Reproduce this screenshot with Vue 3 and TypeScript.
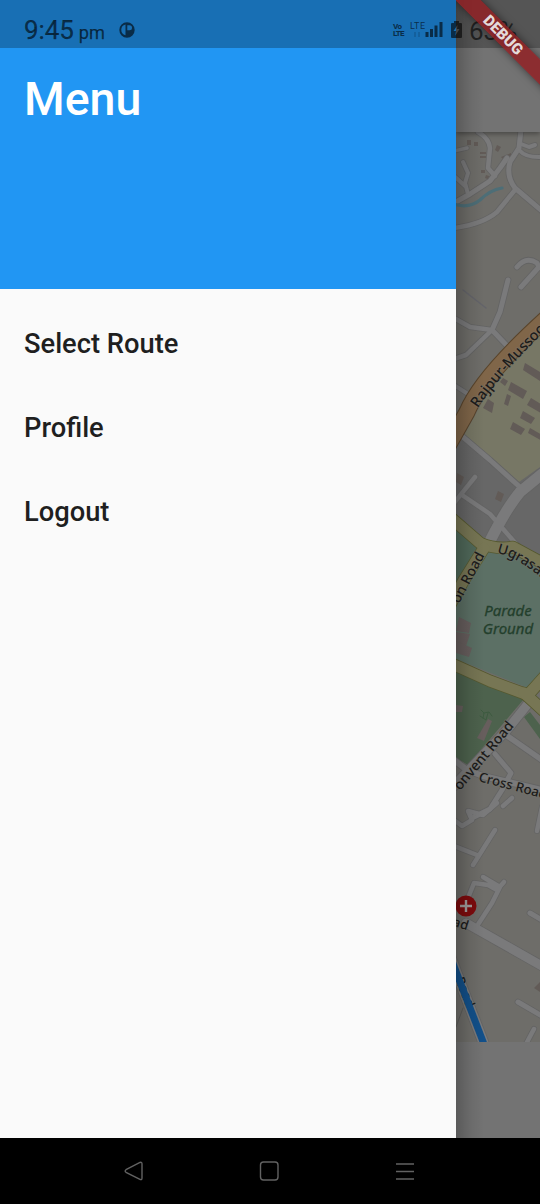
<script setup lang="ts">
interface Road {
  d: string
  w: number
}

const menuItems: string[] = ['Select Route', 'Profile', 'Logout']

const roads: Road[] = [
  { d: 'M454 203 L470 194 L490 181 L500 168 L507 158', w: 5 },
  { d: 'M478 132 Q489 138 490 148 L488 168 L495 176', w: 4.5 },
  { d: 'M521 130 L519 148 L510 162 Q506 176 515 188 L542 211', w: 5 },
  { d: 'M515 190 L497 212 Q483 224 454 228', w: 4.5 },
  { d: 'M519 150 Q526 158 542 157', w: 4 },
  { d: 'M521 144 L529 147 L535 145', w: 4 },
  { d: 'M454 151 L467 148', w: 3.5 },
  { d: 'M463 162 L468 173 L465 183 L468 194 M454 176 L465 186', w: 4 },
  { d: 'M517 267 Q526 256 537 263 L539 267 L521 287', w: 5 },
  { d: 'M508 280 L500 312 L492 330 L513 352', w: 5 },
  { d: 'M454 318 L470 327 L492 330 L466 355 L454 359', w: 4.5 },
  { d: 'M454 385 L468 394', w: 4 },
  { d: 'M463 437 L490 460 L521 488', w: 5 },
  { d: 'M454 503 L475 477', w: 4.5 },
  { d: 'M462 495 L490 514 L518 546', w: 4.5 },
  { d: 'M454 760 L467 770 L483 776 L542 790', w: 6 },
  { d: 'M506 735 L542 760', w: 5.5 },
  { d: 'M495 754 L511 773 L502 790 L490 809 L472 818', w: 5 },
  { d: 'M497 803 L483 815 L468 811 L472 820 L462 826 L454 820', w: 4.5 },
  { d: 'M512 798 L503 806', w: 4.5 },
  { d: 'M542 807 L537 831', w: 4.5 },
  { d: 'M495 830 L473 865 M454 846 L477 855', w: 4.5 },
  { d: 'M468 898 L474 883 L488 885 L497 890 L504 882 M483 877 L500 887 L492 903 L477 926', w: 4.5 },
  { d: 'M530 913 L542 920', w: 5 },
  { d: 'M518 1002 L542 1016', w: 5 },
  { d: 'M534 1029 L526 1044', w: 4.5 },
  { d: 'M466 923 L542 966', w: 9 },
  { d: 'M542 474 L520 492 Q506 509 490 541', w: 11 },
  { d: 'M531 700 L507 730 L467 772 L450 790', w: 9 },
  { d: 'M447 948 L487 1052', w: 10 },
]

const yellowRoads: Road[] = [
  { d: 'M450 517 L480 543 Q496 550 513 547 L544 564', w: 11 },
  { d: 'M484 548 L464 580 L450 605', w: 11 },
  { d: 'M450 663 L490 681 L528 695 L545 676', w: 11 },
  { d: 'M524 693 L546 713', w: 11 },
]

const buildings: string[] = [
  'M525 363 l15 9 v9 l-17 -11z',
  'M511 382 l16 9 -4 8 -15 -9z',
  'M531 398 l10 6 v9 l-14 -8z',
  'M523 411 l12 7 -4 6 -11 -6z',
  'M513 422 l12 7 -4 6 -11 -6z',
  'M530 428 l12 7 v6 l-14 -8z',
  'M488 399 l6 4 -2 10 -9 -5z',
  'M503 378 l5 3 -3 5 -5 -4z',
  'M507 394 l4 2 -3 10 -4 -2z',
]

const pinkBuildings: string[] = [
  'M459 617 l12 6 -2 10 -13 -2z',
  'M456 632 l14 2 -4 12 -10 -4z',
  'M456 641 l16 7 -3 9 -13 -4z',
  'M488 719 l4 2 -8 20 -7 -3z',
  'M456 705 l7 1 -1 6 -6 0z',
]
</script>

<template>
  <div class="screen">
    <main class="stage">
      <aside class="drawer">
        <header class="drawer-header"><h1>Menu</h1></header>
        <nav class="menu">
          <a v-for="item in menuItems" :key="item" class="menu-item">{{ item }}</a>
        </nav>
      </aside>

      <section class="page">
        <div class="appbar"></div>
        <svg class="map" viewBox="456 132 84 910" width="84" height="910">
          <defs>
            <path id="rajpur" d="M478 408 Q500 375 550 326" />
            <path id="ugrasain" d="M497 553 Q519 557 552 587" />
          </defs>
          <rect x="456" y="132" width="84" height="910" fill="#6e6d69" />
          <path d="M456 446 L465 435 L519 479 L540 462 V566 L513 549 L488 549 L456 522z" fill="#676767" />
          <path d="M463 437 L478 410 L493 383 L522 350 L540 335 V467 L519 482z" fill="#777765" />
          <g fill="#625b57">
            <path v-for="b in buildings" :key="b" :d="b" />
            <path d="M467 140h4v5h-4z M474 142h4v4h-4z M480 152h6v2h-6z M480 156h6v2h-6z M481 170h4v3h-4z M497 145l4 2-3 5-3-2z M501 157l10-4v3l-8 3z M486 175l6 2-2 3-5-2z M457 473l7 4-3 8-5-3z M498 491l6 3-3 8-6-3z M540 982l-6 6 6 4z" />
          </g>
          <path d="M456 526 L480 550 L456 589z" fill="#50695a" />
          <path d="M488 552 L514 552 L540 570 V681 L528 688 L456 659 V602z" fill="#5c7065" />
          <path d="M456 670 L524 699 L468 765 L456 758z" fill="#4d624d" />
          <path d="M524 717 L530 712 L540 725 V739z" fill="#4d624d" />
          <g fill="#675e5d">
            <path v-for="b in pinkBuildings" :key="b" :d="b" />
          </g>
          <g fill="none" stroke-linejoin="round" stroke-linecap="round">
            <path d="M463 290 L486 308" stroke="#64646a" stroke-width="1.5" />
            <path v-for="r in roads" :key="'c' + r.d" :d="r.d" stroke="#646464" :stroke-width="r.w + 1.6" />
            <path v-for="r in roads" :key="'f' + r.d" :d="r.d" stroke="#7a7a7b" :stroke-width="r.w" />
            <path d="M454 204 Q469 209 480 200 Q490 190 502 188" stroke="#4d6e77" stroke-width="3.2" />
            <path v-for="r in yellowRoads" :key="'c' + r.d" :d="r.d" stroke="#56592f" :stroke-width="r.w + 1.6" />
            <path v-for="r in yellowRoads" :key="'f' + r.d" :d="r.d" stroke="#777654" :stroke-width="r.w" />
            <path d="M550 315 Q482 376 467 412 L448 446" stroke="#59452c" stroke-width="17" />
            <path d="M550 315 Q482 376 467 412 L448 446" stroke="#806649" stroke-width="15" />
            <path d="M481 710 l3 3 -1 5 M484 713 l5 -1 3 4 M480 716 l6 4 2 -7" stroke="#3d5b40" stroke-width="1" />
            <path d="M456 1027 L463 1008" stroke="#5d5d5b" stroke-width="1" />
          </g>
          <g class="label">
            <text font-size="14.5"><textPath href="#rajpur">Rajpur-Mussoorie</textPath></text>
            <text font-size="14"><textPath href="#ugrasain">Ugrasain</textPath></text>
            <text transform="translate(459 604) rotate(-62)" font-size="14">on Road</text>
            <text transform="translate(460 791) rotate(-50)" font-size="14">onvent Road</text>
            <text transform="translate(478 781) rotate(15)" font-size="13.2">Cross Road</text>
            <text x="452" y="928" font-size="13" transform="rotate(18 460 927)">ad</text>
            <text transform="translate(455 979) rotate(68)" font-size="13">Road</text>
          </g>
          <path d="M447 948 L487 1052" fill="none" stroke="#12508a" stroke-width="7" />
          <g class="park" text-anchor="middle">
            <text x="508" y="616">Parade</text>
            <text x="508" y="634">Ground</text>
          </g>
          <circle cx="466" cy="906" r="10.5" fill="#7e0b0d" />
          <path d="M460 906h12 M466 900v12" stroke="#a09c9b" stroke-width="2.4" />
        </svg>
        <div class="page-footer"></div>
        <div class="drawer-shadow"></div>
      </section>
    </main>

    <div class="statusbar">
      <div class="clock"><span class="time">9:45</span><span class="ampm">pm</span></div>
      <svg class="notif" width="16" height="16" viewBox="0 0 16 16">
        <path fill-rule="evenodd" d="M8 .3a7.700 7.700 0 1 0 0 15.400A7.700 7.700 0 0 0 8 .3z M6.500 2.500V13.200A5.500 5.500 0 0 1 6.500 2.500z M8.300 3.300H10.500A2.500 2.500 0 0 1 10.500 8.300H8.300z" />
      </svg>
      <div class="spacer"></div>
      <div class="volte"><span>Vo</span><span>LTE</span></div>
      <svg class="signal" width="33" height="17" viewBox="0 0 33 17">
        <text x="0" y="8" font-size="9" textLength="15">LTE</text>
        <path d="M5 11v5M9 11v5" opacity=".25" stroke="#000" />
        <path d="M15.500 11h3v5h-3z M20 8h3v8h-3z M24.500 4.500h3v11.500h-3z M29.500 1h3v15h-3z" />
      </svg>
      <svg class="battery" width="11" height="17" viewBox="0 0 11 17">
        <path fill-rule="evenodd" d="M3 0h5v2h2q1 0 1 1v13q0 1-1 1H1q-1 0-1-1V3q0-1 1-1h2z M6.500 4L2.500 10h2.500l-.6 4.500L8.500 8H6z" />
      </svg>
      <span class="percent">63%</span>
    </div>

    <div class="debug-clip"><div class="debug">DEBUG</div></div>

    <footer class="navbar">
      <svg width="22" height="24" viewBox="0 0 22 24"><path d="M18 2.500 Q20 1.700 20 4 V18 Q20 20.500 17.500 19.200 L4 12.300 Q2.300 11 4 9.700z" /></svg>
      <svg width="22" height="24" viewBox="0 0 22 24"><rect x="2.500" y="2" width="17.500" height="18" rx="3" /></svg>
      <svg width="22" height="24" viewBox="0 0 22 24"><path d="M2 4h18M2 11.500h18M2 19h18" /></svg>
    </footer>
  </div>
</template>

<style>
html, body { margin: 0; background: #000; }
</style>

<style scoped>
.screen {
  position: relative;
  width: 540px;
  height: 1204px;
  overflow: hidden;
  display: flex;
  flex-direction: column;
  background: #000;
  font-family: Roboto, "Liberation Sans", sans-serif;
}
.stage { height: 1138px; display: flex; }
.drawer { width: 456px; background: #fafafa; display: flex; flex-direction: column; }
.drawer-header { height: 289px; box-sizing: border-box; padding: 72px 24px 0; background: #2196f3; }
h1 { margin: 0; color: #fff; font-size: 46.500px; line-height: 54px; font-weight: 500; }
.menu { display: flex; flex-direction: column; padding-top: 13px; }
.menu-item {
  height: 84px;
  line-height: 84px;
  padding-left: 24px;
  font-size: 27.300px;
  font-weight: 500;
  color: #1f1f1f;
}
.page { position: relative; width: 84px; background: #737373; display: flex; flex-direction: column; overflow: hidden; }
.appbar { height: 132px; flex: none; box-shadow: 0 2px 5px rgba(0, 0, 0, .35); z-index: 1; background: #737373; }
.map { display: block; flex: none; }
.label { font-family: "Noto Sans", sans-serif; font-weight: 500; fill: #1c1b1a; stroke: #77776f; stroke-opacity: .5; stroke-width: 1.5px; paint-order: stroke; }
.park { font-family: "Noto Sans", sans-serif; font-style: italic; font-weight: 400; font-size: 15px; fill: #233f2c; stroke: #233f2c; stroke-width: .3px; }
.page-footer { flex: 1; }
.drawer-shadow {
  position: absolute;
  inset: 0 auto 0 0;
  width: 28px;
  z-index: 2;
  background: linear-gradient(90deg, rgba(0, 0, 0, .22), rgba(0, 0, 0, .08) 50%, transparent);
}
.statusbar {
  position: absolute;
  inset: 0 0 auto 0;
  height: 48px;
  z-index: 3;
  box-sizing: border-box;
  padding: 14px 0 0 24px;
  display: flex;
  align-items: center;
  background: rgba(0, 0, 0, .26);
  color: rgba(0, 0, 0, .6);
  white-space: nowrap;
}
.statusbar svg { fill: rgba(0, 0, 0, .6); display: block; flex: none; }
.clock { display: flex; align-items: baseline; width: 95px; line-height: 30px; margin-top: 1px; }
.time { font-size: 26px; letter-spacing: -.1px; -webkit-text-stroke: .25px; }
.ampm { font-size: 18.200px; margin-left: 5px; -webkit-text-stroke: .25px; }
.notif { margin-top: -3px; }
.spacer { width: 258px; flex: none; }
.volte { display: flex; flex-direction: column; width: 12px; font-size: 8px; line-height: 7px; font-weight: 800; letter-spacing: -.7px; margin-top: -3px; }
.signal { margin: -4px 0 0 5px; }
.battery { margin: -3px 0 0 8px; }
.percent { font-size: 26px; margin-left: 7px; }
.debug-clip { position: absolute; top: 0; right: 0; width: 84px; height: 100px; overflow: hidden; z-index: 4; }
.debug {
  position: absolute;
  left: -33px;
  top: 26px;
  width: 160px;
  height: 18px;
  transform: rotate(45deg);
  background: rgba(145, 32, 36, .84);
  box-shadow: 0 0 9px rgba(0, 0, 0, .5);
  color: #e4dada;
  text-align: center;
  font-size: 15.300px;
  line-height: 18px;
  font-weight: 900;
}
.navbar { height: 66px; display: flex; justify-content: center; gap: 114px; padding: 22px 2px 0 0; box-sizing: border-box; background: #000; }
.navbar svg { fill: none; stroke: #626262; stroke-width: 1.400; }
</style>
